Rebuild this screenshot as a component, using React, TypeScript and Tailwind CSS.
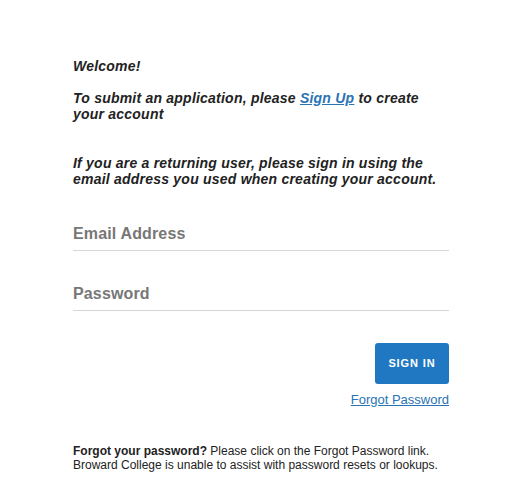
import React from "react";

export default function App() {
  return (
    <div className="min-h-[501px] w-full bg-white" style={{ fontFamily: '"Liberation Sans", Arial, sans-serif' }}>
      <div className="ml-[73px] w-[376px] pt-[58px]">
        <div className="text-[14px] leading-[16.5px] font-bold italic tracking-[0.22px] text-[#222]">
          <p>Welcome!</p>
          <p className="mt-[15px]">
            To submit an application, please{" "}
            <a href="#" className="text-[#2a73b5] underline">Sign Up</a> to create your account
          </p>
          <p className="mt-[32px]">
            If you are a returning user, please sign in using the email address you used when creating your account.
          </p>
        </div>

        <div className="mt-[37px] border-b border-[#d6d6d6] pb-[7px]">
          <div className="text-[16px] leading-[18px] font-bold tracking-[0.15px] text-[#777]">Email Address</div>
        </div>
        <div className="mt-[34px] border-b border-[#d6d6d6] pb-[7px]">
          <div className="text-[16px] leading-[18px] font-bold tracking-[0.15px] text-[#777]">Password</div>
        </div>

        <div className="mt-[32px] flex flex-col items-end">
          <button className="h-[41px] w-[74px] rounded-[3px] bg-[#1f78c1] text-[11px] font-bold tracking-[0.9px] text-white">
            SIGN IN
          </button>
          <a href="#" className="mt-[8px] text-[13px] leading-[16px] text-[#2a73b5] underline">Forgot Password</a>
        </div>

        <p className="mt-[36px] text-[12px] leading-[14px] text-[#222]">
          <span className="font-bold">Forgot your password?</span> Please click on the Forgot Password link. Broward College is unable to assist with password resets or lookups.
        </p>
      </div>
    </div>
  );
}
